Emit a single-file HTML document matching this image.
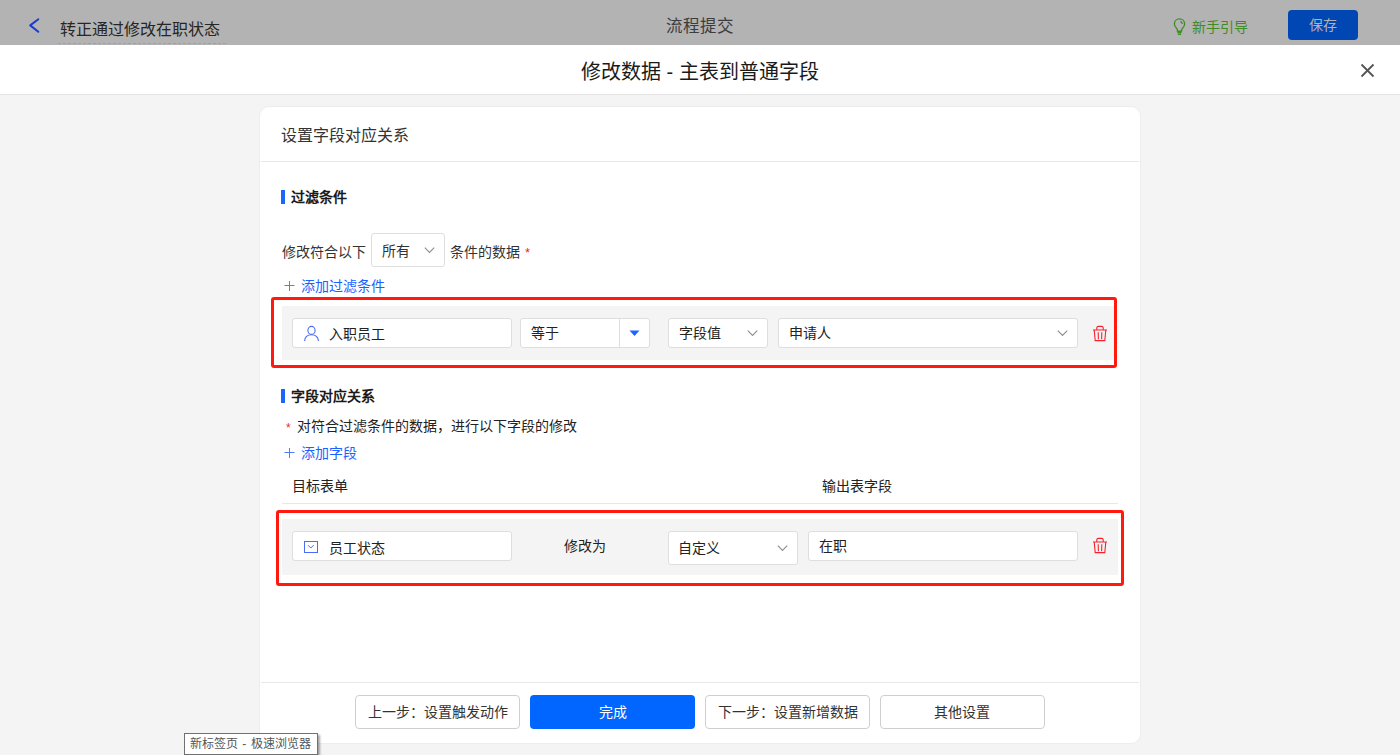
<!DOCTYPE html>
<html lang="zh-CN"><head><meta charset="utf-8">
<style>
*{margin:0;padding:0;box-sizing:border-box}
html,body{width:1400px;height:755px;overflow:hidden;background:#f4f4f4;font-family:"Liberation Sans",sans-serif;color:#333}
.a{position:absolute;white-space:nowrap}
.t14{font-size:14px;line-height:14px}
#top{position:absolute;left:0;top:0;width:1400px;height:45px;background:#b3b3b3}
#mh{position:absolute;left:0;top:45px;width:1400px;height:50px;background:#fff;border-bottom:1px solid #e3e3e3}
#card{position:absolute;left:259px;top:106px;width:882px;height:638px;background:#fff;border:1px solid #ededed;border-radius:10px}
.box{position:absolute;background:#fff;border:1px solid #dedede;border-radius:3px}
.gray{position:absolute;background:#f4f4f4}
.red{position:absolute;border:3px solid #ff1a0d;border-radius:3px}
.bar{position:absolute;left:281px;width:4px;height:14px;background:#1a66ff}
.btn{position:absolute;top:695px;width:165px;height:34px;border:1px solid #cfcfcf;border-radius:4px;background:#fff}
</style></head><body>
<div id="top"></div>
<!-- back chevron -->
<svg class="a" style="left:27px;top:16px" width="14" height="19" viewBox="0 0 14 19"><path d="M11.3 3.2 L3.2 9.4 L11.3 15.8" fill="none" stroke="#1c3ccf" stroke-width="2" stroke-linecap="round" stroke-linejoin="round"/></svg>
<div class="a" style="left:60px;top:22px;font-size:16px;line-height:16px;color:#262626">转正通过修改在职状态</div>
<div class="a" style="left:58px;top:43px;width:168px;height:1px;border-top:1px dashed #a0a0a0"></div>
<div class="a" style="left:666px;top:18px;font-size:16.5px;line-height:17px;color:#3d3d3d">流程提交</div>
<!-- bulb -->
<svg class="a" style="left:1172px;top:17px" width="15" height="19" viewBox="0 0 15 19"><path d="M7.5 1.9c-3 0-5.1 2.3-5.1 5.1 0 1.9 1 3.2 2.1 4.2.6.6.9 1.2.9 2v.9h4.2v-.9c0-.8.3-1.4.9-2 1.1-1 2.1-2.3 2.1-4.2 0-2.8-2.1-5.1-5.1-5.1z M5.4 15.5h4.2 M5.9 17.3h3.2 M8.4 4.3c1 .5 1.7 1.3 2 2.6" fill="none" stroke="#3f8c24" stroke-width="1.3"/></svg>
<div class="a t14" style="left:1192px;top:20px;color:#3f8c24">新手引导</div>
<div class="a" style="left:1288px;top:10px;width:70px;height:30px;background:#0047b3;border-radius:4px"></div>
<div class="a t14" style="left:1309px;top:18px;color:#b3b3b3">保存</div>

<div id="mh"></div>
<div class="a" style="left:581px;top:62px;font-size:20px;line-height:20px;color:#1a1a1a">修改数据 - 主表到普通字段</div>
<svg class="a" style="left:1360px;top:63px" width="15" height="15" viewBox="0 0 15 15"><path d="M1.5 1.5 L13.5 13.5 M13.5 1.5 L1.5 13.5" stroke="#555" stroke-width="1.8"/></svg>

<div id="card"></div>
<div class="a" style="left:281px;top:128px;font-size:16px;line-height:16px;color:#333">设置字段对应关系</div>
<div class="a" style="left:261px;top:161px;width:878px;height:1px;background:#e8e8e8"></div>

<div class="bar" style="top:190px"></div>
<div class="a t14" style="left:291px;top:190px;font-weight:bold;color:#1a1a1a">过滤条件</div>

<div class="a t14" style="left:282px;top:245px">修改符合以下</div>
<div class="box" style="left:371px;top:233px;width:74px;height:34px"></div>
<div class="a t14" style="left:382px;top:244px">所有</div>
<svg class="a" style="left:424px;top:247px" width="11" height="7" viewBox="0 0 11 7"><path d="M0.8 0.7 L5.5 5.5 L10.2 0.7" fill="none" stroke="#8f8f8f" stroke-width="1.15"/></svg>
<div class="a t14" style="left:450px;top:245px">条件的数据</div>
<div class="a" style="left:525px;top:246px;font-size:13px;line-height:13px;color:#f5222d">*</div>

<svg class="a" style="left:284px;top:280px" width="11" height="11" viewBox="0 0 11 11"><path d="M5.5 1 V11 M0.5 5.5 H10.5" stroke="#4a7dff" stroke-width="1"/></svg>
<div class="a t14" style="left:301px;top:279px;color:#1a62ff">添加过滤条件</div>

<!-- filter row -->
<div class="gray" style="left:282px;top:306px;width:832px;height:54px"></div>
<div class="red" style="left:271px;top:297px;width:846px;height:71px"></div>
<div class="box" style="left:292px;top:318px;width:220px;height:30px"></div>
<svg class="a" style="left:303px;top:325px" width="17" height="17" viewBox="0 0 17 17"><ellipse cx="8.5" cy="5.4" rx="3.6" ry="4" fill="none" stroke="#4a6cf7" stroke-width="1.1"/><path d="M1.6 16 C1.9 11.8 4.8 9.8 8.5 9.8 C12.2 9.8 15.1 11.8 15.4 16" fill="none" stroke="#4a6cf7" stroke-width="1.1"/></svg>
<div class="a t14" style="left:329px;top:327px;color:#222">入职员工</div>

<div class="box" style="left:520px;top:318px;width:130px;height:30px"></div>
<div class="a" style="left:619px;top:319px;width:1px;height:28px;background:#dedede"></div>
<svg class="a" style="left:629px;top:330px" width="11" height="7" viewBox="0 0 11 7"><path d="M0.5 0.5 H10.5 L5.5 6 Z" fill="#1a66ff"/></svg>
<div class="a t14" style="left:531px;top:326px;color:#222">等于</div>

<div class="box" style="left:668px;top:318px;width:100px;height:30px"></div>
<div class="a t14" style="left:679px;top:326px;color:#222">字段值</div>
<svg class="a" style="left:747px;top:330px" width="11" height="7" viewBox="0 0 11 7"><path d="M0.8 0.7 L5.5 5.5 L10.2 0.7" fill="none" stroke="#8f8f8f" stroke-width="1.15"/></svg>

<div class="box" style="left:778px;top:318px;width:300px;height:30px"></div>
<div class="a t14" style="left:789px;top:326px;color:#222">申请人</div>
<svg class="a" style="left:1057px;top:330px" width="11" height="7" viewBox="0 0 11 7"><path d="M0.8 0.7 L5.5 5.5 L10.2 0.7" fill="none" stroke="#8f8f8f" stroke-width="1.15"/></svg>

<svg class="a" style="left:1092px;top:325px" width="16" height="17" viewBox="0 0 16 17"><path d="M1 5 H15 M4.8 5 V3 C4.8 1.9 5.6 1.4 6.4 1.4 H9.6 C10.4 1.4 11.2 1.9 11.2 3 V5 M2.2 5 L3.2 15.6 H12.8 L13.8 5 M6.2 7.2 L6.4 14.3 M9.8 7.2 L9.6 14.3" fill="none" stroke="#f5222d" stroke-width="1.1"/></svg>

<!-- mapping -->
<div class="bar" style="top:389px"></div>
<div class="a t14" style="left:291px;top:389px;font-weight:bold;color:#1a1a1a">字段对应关系</div>
<div class="a" style="left:286px;top:422px;font-size:12px;line-height:12px;color:#f5222d">*</div>
<div class="a t14" style="left:297px;top:419px;color:#222">对符合过滤条件的数据，进行以下字段的修改</div>
<svg class="a" style="left:284px;top:447px" width="11" height="11" viewBox="0 0 11 11"><path d="M5.5 1 V11 M0.5 5.5 H10.5" stroke="#4a7dff" stroke-width="1"/></svg>
<div class="a t14" style="left:301px;top:446px;color:#1a62ff">添加字段</div>

<div class="a t14" style="left:292px;top:479px;color:#222">目标表单</div>
<div class="a t14" style="left:822px;top:479px;color:#222">输出表字段</div>
<div class="a" style="left:282px;top:503px;width:836px;height:1px;background:#e8e8e8"></div>

<div class="gray" style="left:282px;top:519px;width:836px;height:56px"></div>
<div class="red" style="left:276px;top:510px;width:848px;height:76px"></div>
<div class="box" style="left:292px;top:531px;width:220px;height:30px"></div>
<svg class="a" style="left:303px;top:540px" width="16" height="14" viewBox="0 0 16 14"><rect x="1.5" y="1.5" width="13" height="11" fill="none" stroke="#4a6cf7" stroke-width="1"/><path d="M5 5.2 L7.8 8 L10.6 5.2" fill="none" stroke="#4a6cf7" stroke-width="1"/></svg>
<div class="a t14" style="left:329px;top:541px;color:#222">员工状态</div>
<div class="a t14" style="left:564px;top:539px;color:#222">修改为</div>
<div class="box" style="left:668px;top:531px;width:130px;height:34px"></div>
<div class="a t14" style="left:678px;top:541px;color:#222">自定义</div>
<svg class="a" style="left:777px;top:545px" width="11" height="7" viewBox="0 0 11 7"><path d="M0.8 0.7 L5.5 5.5 L10.2 0.7" fill="none" stroke="#8f8f8f" stroke-width="1.15"/></svg>
<div class="box" style="left:808px;top:531px;width:270px;height:30px"></div>
<div class="a t14" style="left:819px;top:539px;color:#222">在职</div>
<svg class="a" style="left:1092px;top:537px" width="16" height="17" viewBox="0 0 16 17"><path d="M1 5 H15 M4.8 5 V3 C4.8 1.9 5.6 1.4 6.4 1.4 H9.6 C10.4 1.4 11.2 1.9 11.2 3 V5 M2.2 5 L3.2 15.6 H12.8 L13.8 5 M6.2 7.2 L6.4 14.3 M9.8 7.2 L9.6 14.3" fill="none" stroke="#f5222d" stroke-width="1.1"/></svg>

<!-- footer -->
<div class="a" style="left:261px;top:682px;width:878px;height:1px;background:#e8e8e8"></div>
<div class="btn" style="left:355px"></div>
<div class="a t14" style="left:368px;top:705px;color:#333">上一步：设置触发动作</div>
<div class="a" style="left:530px;top:695px;width:165px;height:34px;background:#0066ff;border-radius:4px"></div>
<div class="a t14" style="left:599px;top:705px;color:#fff">完成</div>
<div class="btn" style="left:705px"></div>
<div class="a t14" style="left:718px;top:705px;color:#333">下一步：设置新增数据</div>
<div class="btn" style="left:880px"></div>
<div class="a t14" style="left:934px;top:705px;color:#333">其他设置</div>

<!-- tooltip -->
<div class="a" style="left:184px;top:733px;width:134px;height:22px;background:#fff;border:1px solid #707070;box-shadow:2px 2px 2px rgba(0,0,0,.35)"></div>
<div class="a" style="left:190px;top:738px;font-size:12px;line-height:12px;color:#555;word-spacing:1px">新标签页 - 极速浏览器</div>
</body></html>
